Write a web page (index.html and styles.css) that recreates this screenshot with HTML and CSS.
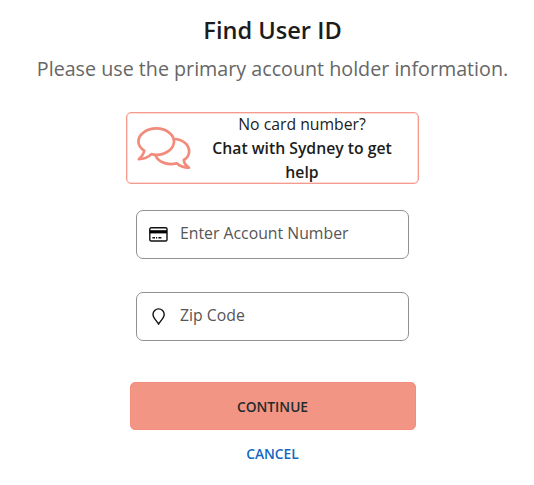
FILE: index.html
```
<!DOCTYPE html>
<html lang="en">
<head>
    <meta charset="UTF-8">
    <meta name="viewport" content="width=device-width, initial-scale=1.0">
    <title>Find User ID</title>
    <link rel="stylesheet" href="styles.css">
</head>
<body>
    <main class="find-user">
        <h1 class="title">Find User ID</h1>
        <p class="subtitle">Please use the primary account holder information.</p>

        <a class="chat-box" href="#">
            <svg class="chat-icon" width="54" height="42" viewBox="0 0 54 42" aria-hidden="true">
                <path d="M7.2 23.6C3.5 21.3 1.4 18.2 1.4 14.6C1.4 7.4 9.6 1.4 19.3 1.4S37 7.4 37 14.6S29 27.8 19.3 27.8C17.6 27.8 16 27.5 14.4 27.1C11.4 30.1 6.4 32.1 1.8 32.2C4.5 29.8 6.7 27 7.2 23.6Z"/>
                <path d="M37.2 12C45.7 12.2 52.1 17.9 52.1 24.4C52.1 27.9 50.3 30.8 46.8 33C47.2 36.5 49.1 38.8 51.9 40.7C47.2 40.8 43.1 39.4 39.8 36.3C31 38.6 21.6 35.6 18.4 28.2"/>
            </svg>
            <span class="chat-text">No card number?<br><strong>Chat with Sydney to get help</strong></span>
        </a>

        <form class="user-form">
            <label class="field">
                <svg class="field-icon" width="19" height="15" viewBox="0 0 19 15" aria-hidden="true">
                    <rect class="line" x="0.8" y="0.8" width="17.2" height="13.2" rx="1.3"/>
                    <rect x="0.8" y="3.2" width="17.2" height="3.2"/>
                    <path class="line" d="M3.4 10.7H6M7 10.7H8.2M9.4 10.7H12.4"/>
                </svg>
                <input type="text" placeholder="Enter Account Number">
            </label>
            <label class="field">
                <svg class="field-icon" width="19" height="17" viewBox="0 0 19 17" aria-hidden="true">
                    <path class="line" d="M9.6 16C7.8 13.2 4 9.8 4 6.5A5.6 5.6 0 0 1 15.2 6.5C15.2 9.8 11.4 13.2 9.6 16Z"/>
                </svg>
                <input type="text" placeholder="Zip Code">
            </label>
            <button class="continue-button" type="button">CONTINUE</button>
        </form>
        <a class="cancel-link" href="#">CANCEL</a>
    </main>
</body>
</html>
```

FILE: styles.css
```
* {
    box-sizing: border-box;
    margin: 0;
    padding: 0;
}

body {
    font-family: "Open Sans", sans-serif;
    color: #1c1c1c;
    background: #fff;
    height: 485px;
    overflow: hidden;
}

.find-user {
    display: flex;
    flex-direction: column;
    align-items: center;
    padding: 13px 0 0 11px;
}

.title {
    font-size: 23.6px;
    font-weight: 600;
    line-height: 34px;
}

.subtitle {
    margin-top: 8px;
    font-size: 19.7px;
    line-height: 28px;
    color: #666;
    white-space: nowrap;
}

/* Chat banner */
.chat-box {
    display: flex;
    align-items: center;
    width: 293px;
    height: 72px;
    margin-top: 29px;
    padding: 0 15px 0 10px;
    border: 1px solid #f59b8d;
    border-radius: 5px;
    box-shadow: inset 0 0 0 1px #fcdcd7;
    color: #1c1c1c;
    text-decoration: none;
}

.chat-icon {
    flex: none;
    fill: none;
    stroke: #f28b7b;
    stroke-width: 2.7;
    stroke-linejoin: round;
}

.chat-text {
    flex: 1;
    padding-left: 10px;
    font-size: 15.75px;
    line-height: 24px;
    text-align: center;
}

.chat-text strong {
    font-weight: 600;
}

/* Form */
.user-form {
    display: flex;
    flex-direction: column;
    align-items: center;
    margin-top: 26px;
}

.field {
    display: flex;
    align-items: center;
    width: 273px;
    height: 49px;
    margin-bottom: 33px;
    padding-left: 12px;
    border: 1px solid #919191;
    border-radius: 7px;
}

.field-icon {
    flex: none;
}

.field-icon .line {
    fill: none;
    stroke: #111;
    stroke-width: 1.4;
}

.field input {
    width: 210px;
    margin: 0 0 3px 12px;
    border: none;
    outline: none;
    background: none;
    font-family: inherit;
    font-size: 15.8px;
    color: #333;
}

.field input::placeholder {
    color: #555;
    opacity: 1;
}

.continue-button {
    width: 286px;
    height: 48px;
    margin-top: 8px;
    border: 1px solid #f38e7f;
    border-radius: 5px;
    background: #f29584;
    font-family: inherit;
    font-size: 13.8px;
    font-weight: 600;
    color: #222b2b;
}

.cancel-link {
    margin-top: 14px;
    font-size: 13.8px;
    font-weight: 600;
    line-height: 20px;
    color: #1467c2;
    text-decoration: none;
}
```
